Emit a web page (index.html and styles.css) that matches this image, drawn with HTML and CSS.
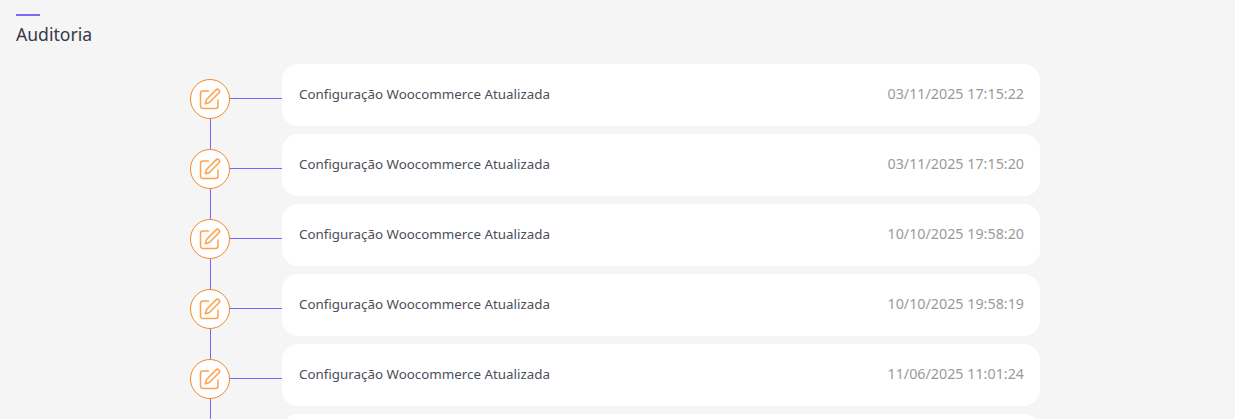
FILE: index.html
```html
<!DOCTYPE html>
<html lang="pt-BR">
<head>
<meta charset="utf-8">
<title>Auditoria</title>
<link rel="stylesheet" href="styles.css">
</head>
<body>
<header class="page-head">
  <span class="accent"></span>
  <h1 class="title">Auditoria</h1>
</header>
<ul class="timeline">
  <li class="row first">
    <div class="marker"><span class="line-top"></span><span class="dot"><svg class="icon" viewBox="0 0 24 24"><path d="M10.500 4H5A2.500 2.500 0 0 0 2.500 6.500V19A2.500 2.500 0 0 0 5 21.500h12.500A2.500 2.500 0 0 0 20 19v-6"/><path d="M18 2.900a2 2 0 0 1 3 2.800l-9.500 9.800-4.200 1.300 1.200-4.300z"/></svg></span><span class="line-bottom"></span></div>
    <span class="link"></span>
    <div class="card"><span class="name">Configuração Woocommerce Atualizada</span><time class="date">03/11/2025 17:15:22</time></div>
  </li>
  <li class="row">
    <div class="marker"><span class="line-top"></span><span class="dot"><svg class="icon" viewBox="0 0 24 24"><path d="M10.500 4H5A2.500 2.500 0 0 0 2.500 6.500V19A2.500 2.500 0 0 0 5 21.500h12.500A2.500 2.500 0 0 0 20 19v-6"/><path d="M18 2.900a2 2 0 0 1 3 2.800l-9.500 9.800-4.200 1.300 1.200-4.300z"/></svg></span><span class="line-bottom"></span></div>
    <span class="link"></span>
    <div class="card"><span class="name">Configuração Woocommerce Atualizada</span><time class="date">03/11/2025 17:15:20</time></div>
  </li>
  <li class="row">
    <div class="marker"><span class="line-top"></span><span class="dot"><svg class="icon" viewBox="0 0 24 24"><path d="M10.500 4H5A2.500 2.500 0 0 0 2.500 6.500V19A2.500 2.500 0 0 0 5 21.500h12.500A2.500 2.500 0 0 0 20 19v-6"/><path d="M18 2.900a2 2 0 0 1 3 2.800l-9.500 9.800-4.200 1.300 1.200-4.300z"/></svg></span><span class="line-bottom"></span></div>
    <span class="link"></span>
    <div class="card"><span class="name">Configuração Woocommerce Atualizada</span><time class="date">10/10/2025 19:58:20</time></div>
  </li>
  <li class="row">
    <div class="marker"><span class="line-top"></span><span class="dot"><svg class="icon" viewBox="0 0 24 24"><path d="M10.500 4H5A2.500 2.500 0 0 0 2.500 6.500V19A2.500 2.500 0 0 0 5 21.500h12.500A2.500 2.500 0 0 0 20 19v-6"/><path d="M18 2.900a2 2 0 0 1 3 2.800l-9.500 9.800-4.200 1.300 1.200-4.300z"/></svg></span><span class="line-bottom"></span></div>
    <span class="link"></span>
    <div class="card"><span class="name">Configuração Woocommerce Atualizada</span><time class="date">10/10/2025 19:58:19</time></div>
  </li>
  <li class="row">
    <div class="marker"><span class="line-top"></span><span class="dot"><svg class="icon" viewBox="0 0 24 24"><path d="M10.500 4H5A2.500 2.500 0 0 0 2.500 6.500V19A2.500 2.500 0 0 0 5 21.500h12.500A2.500 2.500 0 0 0 20 19v-6"/><path d="M18 2.900a2 2 0 0 1 3 2.800l-9.500 9.800-4.200 1.300 1.200-4.300z"/></svg></span><span class="line-bottom"></span></div>
    <span class="link"></span>
    <div class="card"><span class="name">Configuração Woocommerce Atualizada</span><time class="date">11/06/2025 11:01:24</time></div>
  </li>
  <li class="row">
    <div class="marker"><span class="line-top"></span></div>
    <span class="link-empty"></span>
    <div class="card"></div>
  </li>
</ul>
</body>
</html>
```
FILE: styles.css
```css
* { box-sizing: border-box; }
html, body { height: 100%; overflow: hidden; }
body {
  margin: 0;
  background: #f5f5f5;
  font-family: "Noto Sans", "Open Sans", sans-serif;
  color: #3f4550;
}
.page-head {
  display: flex;
  flex-direction: column;
  align-items: flex-start;
  padding: 14px 16px 0;
  height: 64px;
}
.accent { width: 24px; height: 2px; background: #8468f5; }
.title {
  margin: 6px 0 0;
  font-size: 17.6px;
  line-height: 24px;
  font-weight: 400;
  color: #343a46;
}
.timeline {
  list-style: none;
  margin: 0;
  padding: 0 0 0 190px;
  width: 1040px;
}
.row { display: flex; height: 70px; }
.marker { display: flex; flex-direction: column; align-items: center; width: 40px; flex: none; }
.line-top { width: 1px; height: 15px; background: #7b61ff; }
.first .line-top { background: transparent; }
.line-bottom { width: 1px; height: 15px; background: #7b61ff; }
.dot {
  width: 40px; height: 40px; flex: none;
  border: 1px solid #f08a24;
  border-radius: 50%;
  background: #fff;
  display: flex; align-items: center; justify-content: center;
}
.icon {
  width: 24px; height: 24px;
  fill: none;
  stroke: #ffa14f;
  stroke-width: 1.500;
  stroke-linecap: round;
  stroke-linejoin: round;
}
.link { width: 52px; height: 1px; margin-top: 34px; background: #7b61ff; flex: none; }
.link-empty { width: 52px; flex: none; }
.card {
  flex: 1;
  height: 62px;
  background: #fff;
  border-radius: 16px;
  display: flex;
  align-items: center;
  justify-content: space-between;
  padding: 0 16px 0 17px;
  font-size: 13.37px;
}
.name { color: #4a4f59; position: relative; top: -1px; }
.date { color: #9a9a9a; font-size: 14.3px; position: relative; top: -2px; }
```
